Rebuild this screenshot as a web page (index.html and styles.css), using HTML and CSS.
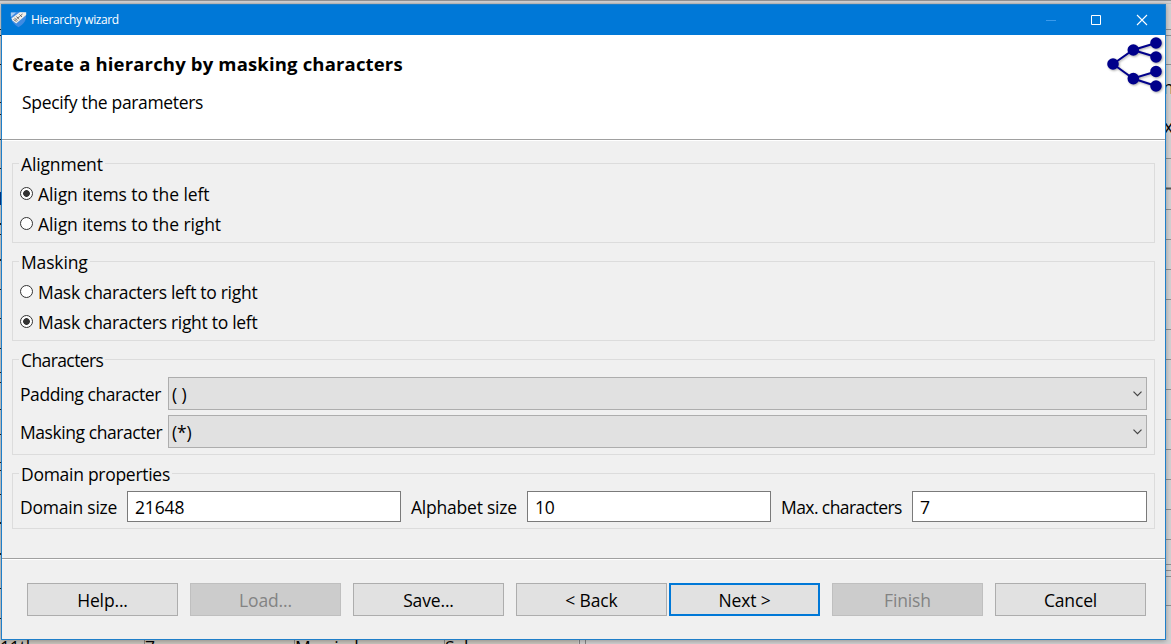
FILE: index.html
```html
<!DOCTYPE html>
<html lang="en">
<head>
<meta charset="utf-8">
<title>Hierarchy wizard</title>
<link rel="stylesheet" href="styles.css">
</head>
<body>
<svg class="backdrop" width="1171" height="644" aria-hidden="true">
  <rect width="1171" height="644" fill="#d2d1d2"/>
  <path d="M0 .5H1171" stroke="#929192"/>
  <path d="M0 3.5H1171" stroke="#c4c3c4"/>
  <path d="M1166 29.5h5M1166 35.5h5M1166 64.5h5M1166 158.5h5M1166 209.5h5M1166 239.5h5M1166 269.5h5M1166 299.5h5M1166 329.5h5M1166 359.5h5M1166 389.5h5M1166 419.5h5M1166 449.5h5M1166 479.5h5M1166 509.5h5M1166 539.5h5M1166 564.5h5M1166 570.5h5M1166 576.5h5M1166 605.5h5" stroke="#8e8d8e"/>
  <path d="M1166 188.5h5" stroke="#555" stroke-width="2"/>
  <path d="M.5 29v1M.5 35v1M.5 64v1M.5 102v1M.5 114v1M.5 139v1M.5 168v1M.5 223v2M.5 234v1M.5 259v2M.5 289v1M.5 318v1M.5 348v1M.5 372v1M.5 382v1M.5 409v1M.5 434v1M.5 462v1M.5 470v1M.5 494v1M.5 522v2M.5 553v2M.5 588v1M.5 618v1" stroke="#222"/>
  <path d="M.5 192v13" stroke="#00388a"/>
  <path d="M0 641.5h578M0 643h578" stroke="#cbc7bf" stroke-width="3"/>
  <path d="M144.5 640v4M294.5 640v4M444.5 640v4M579.5 640v4M585.5 640v4" stroke="#858585"/>
  <text x="1163" y="94">n</text>
  <text x="1164" y="133">x</text>
</svg>
<svg class="backdrop front" width="600" height="4" viewBox="0 640 600 4" aria-hidden="true">
  <text x="0" y="654">11th</text>
  <text x="145" y="654">7</text>
  <text x="295" y="654">Married-sp</text>
  <text x="445" y="654">Sales</text>
</svg>
<main class="window">
  <header class="titlebar">
    <svg class="app-icon" width="17" height="17" viewBox="0 0 17 17">
      <path d="M1 1.500Q4 1.800 8.500 .8Q13 1.800 16 1.500V7Q15 12.500 8.500 16.300Q2 12.500 1 7Z" fill="#3f8be2"/>
      <path d="M.8 1.500H6L.8 6Z" fill="#a9cdf4"/>
      <path d="M1.500 7.200L9.800 1.300L16.200 1.300V4L6.200 12.500L2.500 9.500Z" fill="#f2f0eb"/>
      <path d="M3.500 8.500l3 2M4.500 7.200L7.500 9.500M6.500 5.500l2.500 2.800M6.800 7.300L9.500 5.800M9.500 3.500l2.500 2.500M12.500 3L9.500 5.500" stroke="#5f5e5e" stroke-width=".9" fill="none"/>
    </svg>
    <span class="title">Hierarchy wizard</span>
    <svg class="controls" width="140" height="31" viewBox="0 0 140 31" fill="none">
      <path d="M21 15.500H31" stroke="#3b9aeb"/>
      <path d="M66.500 10.500h9v9h-9z" stroke="#fff"/>
      <path d="M112 10l10 10M122 10l-10 10" stroke="#fff" stroke-width="1.100"/>
    </svg>
  </header>
  <section class="banner">
    <div>
      <h1>Create a hierarchy by masking characters</h1>
      <p>Specify the parameters</p>
    </div>
    <svg class="tree" width="60" height="60" viewBox="0 0 60 60">
      <g stroke="#00008b" stroke-width="2" fill="#00008b">
        <path d="M8 29L28 15L51 8M28 15L51 22M8 29L28 43.500L51 36.500M28 43.500L51 51" fill="none"/>
        <circle cx="8" cy="29" r="4.800"/><circle cx="28.300" cy="15" r="4.800"/><circle cx="28.300" cy="43.600" r="4.800"/>
        <circle cx="51" cy="8" r="4.800"/><circle cx="51" cy="22" r="4.800"/><circle cx="51" cy="36.500" r="4.800"/><circle cx="51" cy="51" r="4.800"/>
      </g>
    </svg>
  </section>
  <form class="content">
    <section class="group align">
      <h2>Alignment</h2>
      <label class="option"><i class="radio on"></i>Align items to the left</label>
      <label class="option"><i class="radio"></i>Align items to the right</label>
    </section>
    <section class="group masking">
      <h2>Masking</h2>
      <label class="option"><i class="radio"></i>Mask characters left to right</label>
      <label class="option"><i class="radio on"></i>Mask characters right to left</label>
    </section>
    <section class="group chars">
      <h2>Characters</h2>
      <div class="combo-row"><span>Padding character</span><div class="combo"><span>( )</span><svg width="9" height="6" viewBox="0 0 9 6"><path d="M.5 .7L4.500 4.700L8.500 .7" fill="none" stroke="#444" stroke-width="1.200"/></svg></div></div>
      <div class="combo-row"><span>Masking character</span><div class="combo"><span>(*)</span><svg width="9" height="6" viewBox="0 0 9 6"><path d="M.5 .7L4.500 4.700L8.500 .7" fill="none" stroke="#444" stroke-width="1.200"/></svg></div></div>
    </section>
    <section class="group domain">
      <h2>Domain properties</h2>
      <div class="fields">
        <span>Domain size</span><div class="field">21648</div>
        <span>Alphabet size</span><div class="field">10</div>
        <span class="max">Max. characters</span><div class="field">7</div>
      </div>
    </section>
  </form>
  <footer class="buttons">
    <div class="button">Help...</div>
    <div class="button disabled">Load...</div>
    <div class="button">Save...</div>
    <div class="pair"><div class="button">&lt; Back</div><div class="button primary">Next &gt;</div></div>
    <div class="button disabled">Finish</div>
    <div class="button">Cancel</div>
  </footer>
</main>
</body>
</html>
```
FILE: styles.css
```css
* { box-sizing: border-box; }
body {
  margin: 0;
  width: 1171px;
  height: 644px;
  padding: 4px 5px 4px 1px;
  overflow: hidden;
  font: 17.5px/24px "Open Sans", "Noto Sans", sans-serif;
  letter-spacing: -0.15px;
  color: #000;
}
.backdrop { position: absolute; left: 0; top: 0; z-index: -1; }
.backdrop.front { top: 640px; }
.window {
  display: flex;
  flex-direction: column;
  width: 1165px;
  height: 636px;
  border: 1px solid #1f7fc9;
  background: #f0f0f0;
  box-shadow: 0 1px 5px rgba(0, 0, 0, .3);
}
.titlebar {
  display: flex;
  flex: none;
  align-items: center;
  height: 30px;
  padding-left: 8px;
  background: #0078d7;
  color: #fff;
}
.app-icon { margin-top: -2px; }
.title { margin-left: 4px; font-size: 12px; letter-spacing: -0.4px; }
.controls { margin-left: auto; }
.banner {
  display: flex;
  flex: none;
  justify-content: space-between;
  height: 104px;
  background: #fff;
}
.banner h1 { margin: 17px 0 0 10px; font-size: 18.5px; line-height: 24px; font-weight: 700; letter-spacing: 0.16px; }
.banner p { margin: 14px 0 0 20px; letter-spacing: -0.33px; }
.tree { filter: drop-shadow(1px 1px 1px rgba(0, 0, 0, .35)); }
.content {
  display: flex;
  flex: none;
  flex-direction: column;
  gap: 18px;
  height: 419px;
  padding: 23px 10px 0;
  border-top: 1px solid #a0a0a0;
  box-shadow: inset 0 1px #fff;
}
.group { height: 80px; border: 1px solid #dcdcdc; padding: 0 7px; }
.group h2 {
  width: max-content;
  height: 24px;
  margin: -12px 0 3px -1px;
  padding: 0 2px;
  background: #f0f0f0;
  font-size: inherit;
  line-height: 24px;
  font-weight: 400;
}
.option { display: flex; align-items: center; height: 30px; gap: 5px; }
.align .option { letter-spacing: -0.08px; }
.masking .option { letter-spacing: -0.3px; }
.radio {
  width: 13px;
  height: 13px;
  margin-top: -2px;
  border: 1px solid #333;
  border-radius: 50%;
  background: #fff;
}
.radio.on { background: radial-gradient(circle, #333 0 3px, #fff 3.7px); }
.group.chars { height: 96px; }
.combo-row { display: flex; align-items: center; height: 33px; margin-bottom: 5px; }
.group.chars h2 { margin-bottom: 5px; letter-spacing: -0.6px; }
.combo-row > span { width: 148px; white-space: nowrap; letter-spacing: -0.43px; }
.combo {
  display: flex;
  flex: 1;
  align-items: center;
  justify-content: space-between;
  height: 33px;
  padding: 0 4px 0 3px;
  border: 1px solid #adadad;
  background: #e1e1e1;
}
.group.domain { height: 56px; }
.group.domain h2 { margin-bottom: 5px; letter-spacing: -0.28px; }
.fields {
  display: grid;
  grid-template-columns: 107px 274px 126px 244px 141px 235px;
  height: 31px;
  align-items: center;
}
.fields > span { white-space: nowrap; letter-spacing: -0.22px; }
.fields > span:not(:first-child) { padding-left: 10px; }
.fields > .max { letter-spacing: -0.58px; }
.field { height: 31px; padding: 3px 7px; border: 1px solid #7a7a7a; background: #fff; }
.buttons {
  display: flex;
  gap: 12px;
  flex: 1;
  padding: 24px 0 0 25px;
  border-top: 1px solid #a0a0a0;
  box-shadow: inset 0 1px #fff;
}
.pair { display: flex; gap: 2px; }
.button {
  width: 151px;
  height: 33px;
  border: 1px solid #adadad;
  background: #e1e1e1;
  line-height: 33px;
  text-align: center;
}
.button.primary { border: 2px solid #0078d7; line-height: 31px; }
.button.disabled { border-color: #bfbfbf; background: #ccc; color: #838383; }
```
